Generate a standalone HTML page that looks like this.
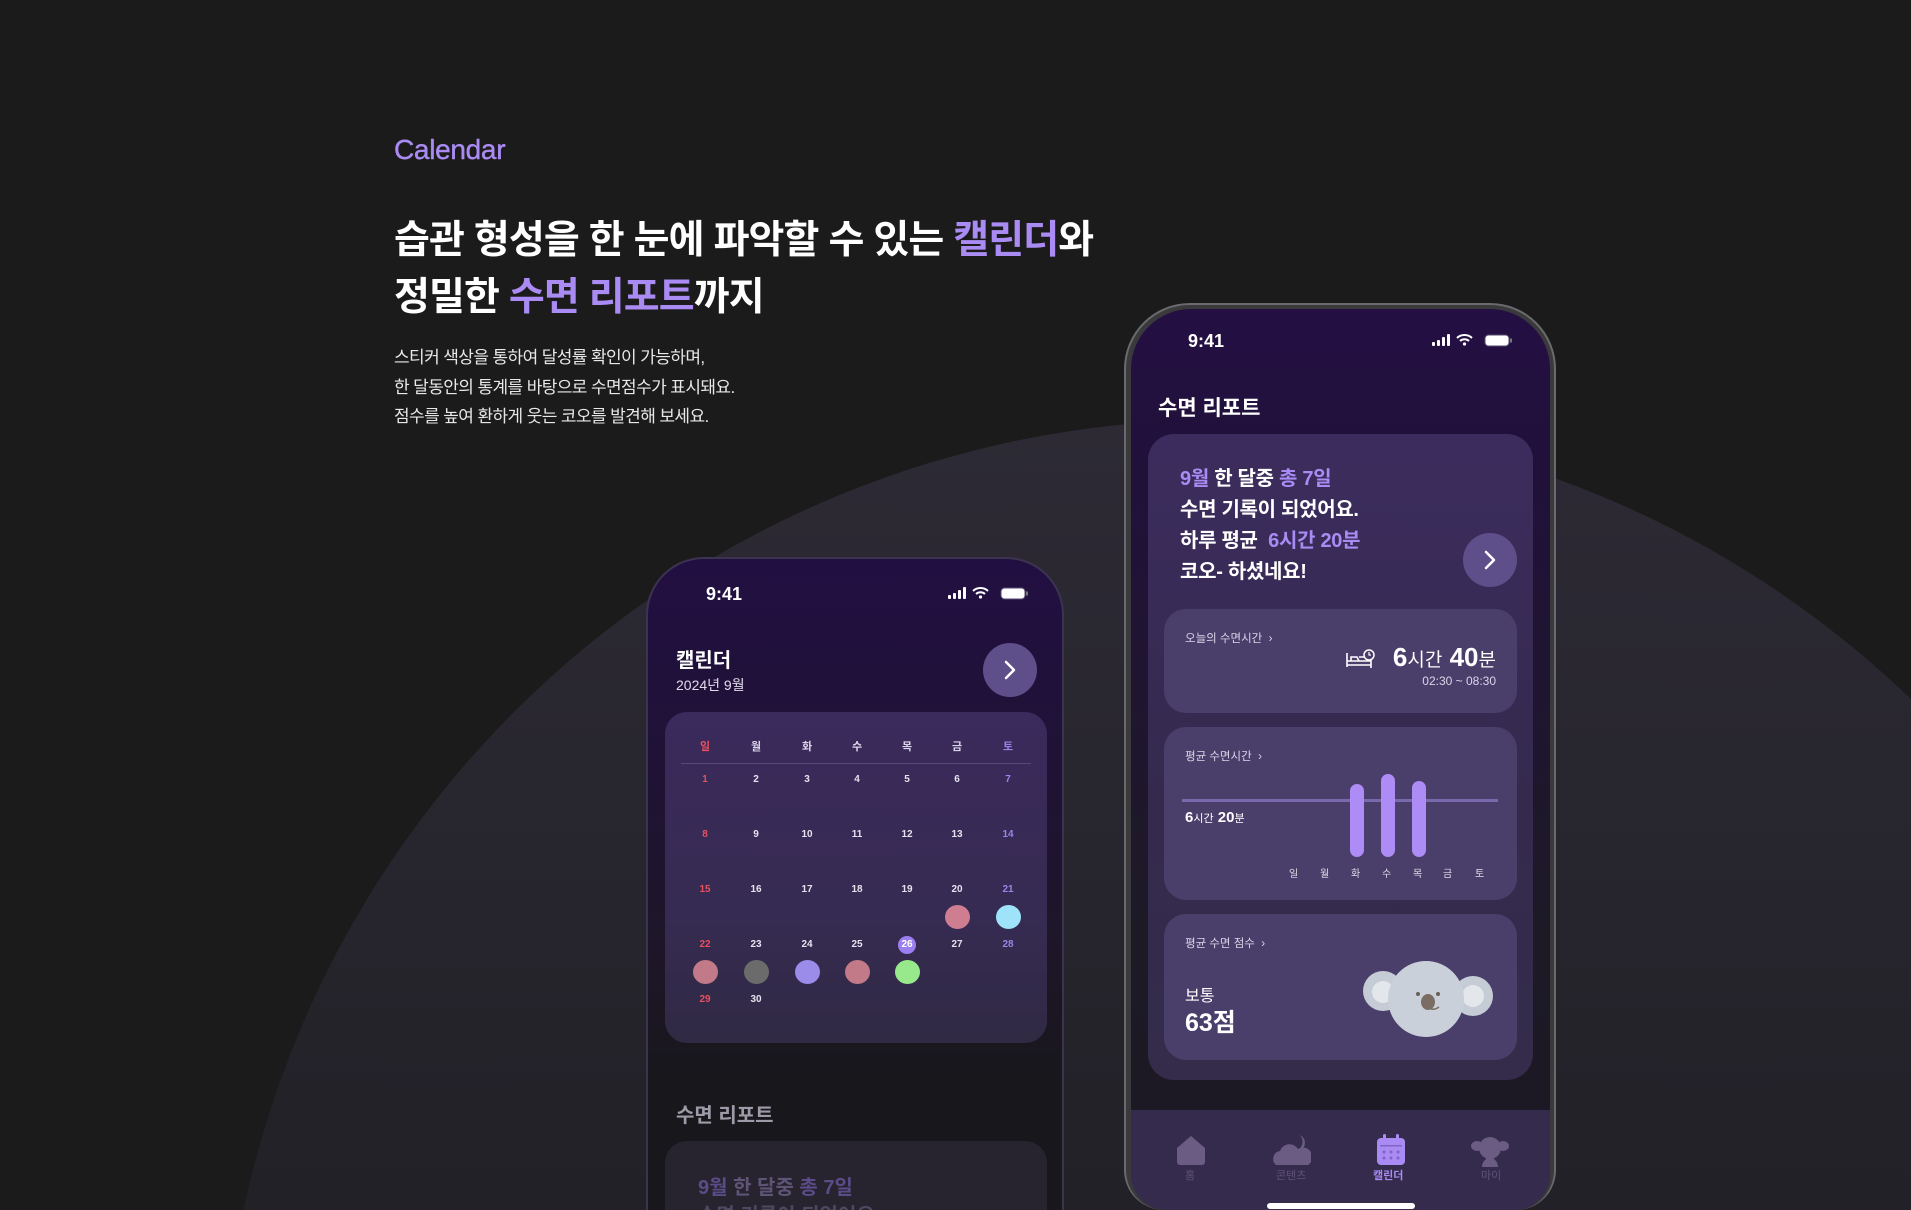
<!DOCTYPE html>
<html style="width:1911px;height:1210px;overflow:hidden"><head><meta charset="utf-8"><style>
*{margin:0;padding:0;box-sizing:border-box}
body{width:1911px;height:1210px;overflow:hidden;background:#1b1b1b;font-family:"Liberation Sans","Noto Sans CJK KR",sans-serif;position:relative;color:#fff}
.a{position:absolute;white-space:nowrap}
.p{color:#a98bf3}
.cl{font-weight:bold}
</style></head><body>
<div style="position:absolute;left:0;top:0;width:1911px;height:1210px;overflow:hidden">
<svg class="a" style="left:0;top:0" width="1911" height="1210" viewBox="0 0 1911 1210">
 <defs><linearGradient id="g" x1="0" y1="420" x2="0" y2="1210" gradientUnits="userSpaceOnUse"><stop offset="0" stop-color="#2d2a35"/><stop offset="1" stop-color="#222127"/></linearGradient></defs>
 <circle cx="1219" cy="1417" r="997" fill="url(#g)"/>
</svg>

<div class="a" style="left:394px;top:134px;font-size:28px;color:#a98bf3;letter-spacing:-0.3px;-webkit-text-stroke:0.4px #a98bf3">Calendar</div>
<div class="a cl" style="left:394px;top:212px;font-size:39px;letter-spacing:-0.9px;line-height:57px">습관 형성을 한 눈에 파악할 수 있는 <span class="p">캘린더</span>와<br>정밀한 <span class="p">수면 리포트</span>까지</div>
<div class="a" style="left:394px;top:343px;font-size:17px;letter-spacing:-0.6px;line-height:29.5px;color:#e8e8e8">스티커 색상을 통하여 달성률 확인이 가능하며,<br>한 달동안의 통계를 바탕으로 수면점수가 표시돼요.<br>점수를 높여 환하게 웃는 코오를 발견해 보세요.</div>

<!-- Left phone -->
<div class="a" style="left:646px;top:557px;width:418px;height:653px;border-radius:58px 58px 0 0;border:2px solid #3b3350;border-bottom:none;background:linear-gradient(180deg,#220f42 0%,#1f1236 30%,#1e1628 60%,#18171c 80%);overflow:hidden">
 <div class="a cl" style="left:58px;top:25px;font-size:18px">9:41</div>
 <svg class="a" style="left:298px;top:27px" width="84" height="16" viewBox="0 0 84 16">
  <rect x="2" y="9" width="3" height="4" rx="1" fill="#fff"/><rect x="7" y="7" width="3" height="6" rx="1" fill="#fff"/><rect x="12" y="4" width="3" height="9" rx="1" fill="#fff"/><rect x="17" y="1" width="3" height="12" rx="1" fill="#fff"/>
  <path d="M27 5a11 11 0 0 1 15 0M30 8a6.5 6.5 0 0 1 9 0" stroke="#fff" stroke-width="2" fill="none"/><circle cx="34.5" cy="11" r="1.6" fill="#fff"/>
  <rect x="55" y="2" width="24" height="11" rx="3.5" fill="#fff" stroke="#554a70"/><rect x="80" y="5.5" width="2" height="4" fill="#777"/>
 </svg>
 <div class="a cl" style="left:28px;top:85px;font-size:20px">캘린더</div>
 <div class="a" style="left:28px;top:116px;font-size:14px;color:#e0dcea">2024년 9월</div>
 <div class="a" style="left:335px;top:84px;width:54px;height:54px;border-radius:50%;background:#5e4e8a"></div>
 <svg class="a" style="left:352px;top:101px" width="20" height="20" viewBox="0 0 20 20"><path d="M6 2l8 8-8 8" stroke="#fff" stroke-width="2.5" fill="none" stroke-linecap="round" stroke-linejoin="round"/></svg>
 <div class="a" style="left:17px;top:153px;width:382px;height:331px;border-radius:22px;background:linear-gradient(180deg,#3b2a5c 0%,#362b52 60%,#302a44 100%)">
  <div class="a" style="left:16px;top:51px;width:350px;height:1px;background:#554a72"></div>
 </div>
 <div id="cal"></div>
 <div class="a cl" style="left:28px;top:540px;font-size:20px;color:#9e9aa8">수면 리포트</div>
 <div class="a" style="left:17px;top:582px;width:382px;height:200px;border-radius:22px;background:#27232f"></div>
 <div class="a cl" style="left:50px;top:612px;font-size:20px;color:#5e5475"><span style="color:#5a4c86">9월</span> 한 달중 <span style="color:#5a4c86">총 7일</span></div>
 <div class="a cl" style="left:50px;top:640px;font-size:20px;color:#4e4960">수면 기록이 되었어요.</div>
</div>

<!-- Right phone -->
<div class="a" style="left:1124px;top:303px;width:432px;height:907px;border-radius:66px 66px 40px 40px;background:#3a3a3c;border:2px solid #6a6a6e;border-bottom:none"></div>
<div class="a" style="left:1131px;top:309px;width:419px;height:901px;border-radius:60px 60px 36px 36px;background:linear-gradient(180deg,#240f43 0%,#21103b 15%,#1d1a26 70%,#1b1824 100%);overflow:hidden">
 <div class="a cl" style="left:57px;top:22px;font-size:18px">9:41</div>
 <svg class="a" style="left:299px;top:24px" width="84" height="16" viewBox="0 0 84 16">
  <rect x="2" y="9" width="3" height="4" rx="1" fill="#fff"/><rect x="7" y="7" width="3" height="6" rx="1" fill="#fff"/><rect x="12" y="4" width="3" height="9" rx="1" fill="#fff"/><rect x="17" y="1" width="3" height="12" rx="1" fill="#fff"/>
  <path d="M27 5a11 11 0 0 1 15 0M30 8a6.5 6.5 0 0 1 9 0" stroke="#fff" stroke-width="2" fill="none"/><circle cx="34.5" cy="11" r="1.6" fill="#fff"/>
  <rect x="55" y="2" width="24" height="11" rx="3.5" fill="#fff" stroke="#554a70"/><rect x="80" y="5.5" width="2" height="4" fill="#777"/>
 </svg>
 <div class="a cl" style="left:27px;top:83px;font-size:21px">수면 리포트</div>
 <div class="a" style="left:17px;top:125px;width:385px;height:646px;border-radius:26px;background:linear-gradient(180deg,#3c2c5e 0%,#352a4f 50%,#342c4a 100%)"></div>
 <div class="a cl" style="left:49px;top:155px;font-size:20px;line-height:31px;letter-spacing:-0.3px"><span class="p">9월</span> 한 달중 <span class="p">총 7일</span><br>수면 기록이 되었어요.<br>하루 평균 &nbsp;<span class="p">6시간 20분</span><br>코오- 하셨네요!</div>
 <div class="a" style="left:332px;top:224px;width:54px;height:54px;border-radius:50%;background:#5e4e8a"></div>
 <svg class="a" style="left:349px;top:241px" width="20" height="20" viewBox="0 0 20 20"><path d="M6 2l8 8-8 8" stroke="#fff" stroke-width="2.5" fill="none" stroke-linecap="round" stroke-linejoin="round"/></svg>

 <div class="a" style="left:33px;top:300px;width:353px;height:104px;border-radius:22px;background:#4a3e6a"></div>
 <div class="a" style="left:54px;top:321px;font-size:11.5px;color:#dcd6ea">오늘의 수면시간 &nbsp;›</div>
 <svg class="a" style="left:214px;top:338px" width="30" height="22" viewBox="0 0 30 22"><path d="M2 6v14M2 18h24v3M2 14h24v4M6 14v-4h6l2 4M14 10h8a4 4 0 0 1 4 4" stroke="#fff" stroke-width="1.6" fill="none"/><circle cx="24" cy="8" r="5" stroke="#fff" stroke-width="1.5" fill="#4a3e6a"/><path d="M24 5v3h2" stroke="#fff" stroke-width="1.2" fill="none"/></svg>
 <div class="a cl" style="right:54px;top:333px;font-size:26px;line-height:30px">6<span style="font-size:19px;font-weight:normal">시간</span> 40<span style="font-size:19px;font-weight:normal">분</span></div>
 <div class="a" style="right:54px;top:365px;font-size:12px;color:#dcd6ea">02:30 ~ 08:30</div>

 <div class="a" style="left:33px;top:418px;width:353px;height:173px;border-radius:22px;background:#4a3e6a"></div>
 <div class="a" style="left:54px;top:439px;font-size:11.5px;color:#dcd6ea">평균 수면시간 &nbsp;›</div>
 <div class="a" style="left:51px;top:490px;width:316px;height:3px;background:#7a68ac"></div>
 <div class="a" style="left:219px;top:475px;width:14px;height:73px;border-radius:7px;background:#ad8cf5"></div>
 <div class="a" style="left:250px;top:465px;width:14px;height:83px;border-radius:7px;background:#ad8cf5"></div>
 <div class="a" style="left:281px;top:472px;width:14px;height:76px;border-radius:7px;background:#ad8cf5"></div>
 <div class="a cl" style="left:54px;top:500px;font-size:15px">6<span style="font-size:11px;font-weight:normal">시간</span> 20<span style="font-size:11px;font-weight:normal">분</span></div>
 <div class="a" style="left:158px;top:556px;font-size:10px;color:#e0dcea">
  <span class="a" style="left:0">일</span><span class="a" style="left:31px">월</span><span class="a" style="left:62px">화</span><span class="a" style="left:93px">수</span><span class="a" style="left:124px">목</span><span class="a" style="left:154px">금</span><span class="a" style="left:186px">토</span></div>

 <div class="a" style="left:33px;top:605px;width:353px;height:146px;border-radius:22px;background:#4a3e6a"></div>
 <div class="a" style="left:54px;top:626px;font-size:11.5px;color:#dcd6ea">평균 수면 점수 &nbsp;›</div>
 <div class="a" style="left:54px;top:673px;font-size:16px">보통</div>
 <div class="a cl" style="left:54px;top:694px;font-size:25px">63점</div>
 <svg class="a" style="left:230px;top:650px" width="134" height="80" viewBox="0 0 134 80">
  <circle cx="22" cy="32" r="20" fill="#c5ccd6"/><circle cx="22" cy="33" r="11" fill="#e3e7ec"/>
  <circle cx="112" cy="37" r="20" fill="#c5ccd6"/><circle cx="112" cy="37" r="11" fill="#e3e7ec"/>
  <circle cx="65" cy="40" r="38" fill="#c9d0da"/>
  <circle cx="57" cy="35" r="2" fill="#6b5f58"/><circle cx="77" cy="35" r="2" fill="#6b5f58"/>
  <ellipse cx="67" cy="43" rx="7" ry="8" fill="#7a6d64"/><path d="M70 50q4 1 8-2" stroke="#7a6d64" stroke-width="1.5" fill="none"/>
 </svg>

 <div class="a" style="left:0;top:801px;width:419px;height:100px;background:#352c4d"></div>
 <svg class="a" style="left:45px;top:826px" width="30" height="30" viewBox="0 0 30 30"><path d="M15 1L29 13V27a3 3 0 0 1-3 3H4a3 3 0 0 1-3-3V13z" fill="#6a5c82"/></svg>
 <div class="a" style="left:54px;top:858px;font-size:11px;color:#5e5278">홈</div>
 <svg class="a" style="left:142px;top:825px" width="38" height="32" viewBox="0 0 38 32"><path d="M3 31a8 8 0 0 1 4-14 10 10 0 0 1 18-2 7 7 0 0 1 10 16z" fill="#6a5c82"/><path d="M27 1a9 9 0 0 1 4 12 8 8 0 0 1-8 4 10 10 0 0 0 4-16z" fill="#6a5c82"/></svg>
 <div class="a" style="left:145px;top:858px;font-size:11px;color:#5e5278">콘텐츠</div>
 <svg class="a" style="left:245px;top:825px" width="30" height="32" viewBox="0 0 30 32"><rect x="1" y="4" width="28" height="27" rx="4" fill="#a98bf3"/><rect x="7" y="0" width="3" height="7" rx="1.5" fill="#a98bf3"/><rect x="20" y="0" width="3" height="7" rx="1.5" fill="#a98bf3"/><rect x="4" y="11" width="22" height="1.5" fill="#7e66c4"/><g fill="#7e66c4"><circle cx="8" cy="18" r="1.5"/><circle cx="15" cy="18" r="1.5"/><circle cx="22" cy="18" r="1.5"/><circle cx="8" cy="24" r="1.5"/><circle cx="15" cy="24" r="1.5"/><circle cx="22" cy="24" r="1.5"/></g></svg>
 <div class="a cl" style="left:242px;top:858px;font-size:11px;color:#a98bf3">캘린더</div>
 <svg class="a" style="left:340px;top:828px" width="38" height="30" viewBox="0 0 38 30"><circle cx="19" cy="11" r="11" fill="#6a5c82"/><ellipse cx="6" cy="9" rx="6" ry="5" fill="#6a5c82"/><ellipse cx="32" cy="9" rx="6" ry="5" fill="#6a5c82"/><path d="M11 30a8 9 0 0 1 16 0z" fill="#6a5c82"/><rect x="15" y="18" width="8" height="6" fill="#6a5c82"/></svg>
 <div class="a" style="left:350px;top:858px;font-size:11px;color:#5e5278">마이</div>
 <div class="a" style="left:136px;top:894px;width:148px;height:6px;border-radius:3px;background:#fff"></div>
</div>
</div>

<script>
(function(){
 var c=document.getElementById('cal');var h='';
 var xs=[57,108,159,209,259,309,360];
 var days=['일','월','화','수','목','금','토'];
 for(var i=0;i<7;i++){var col=i==0?'#e8505e':(i==6?'#9a84e8':'#dcd6ea');
  h+='<div class="a cl" style="left:'+(xs[i]-15)+'px;width:30px;text-align:center;top:179px;font-size:11px;color:'+col+'">'+days[i]+'</div>';}
 var ys=[215,270,325,380,435];
 for(var d=1;d<=30;d++){var k=d-1;var r=Math.floor(k/7),w=k%7;
  var col=w==0?'#e8505e':(w==6?'#9a84e8':'#e6e2ef');
  if(d==26){h+='<div class="a" style="left:'+(xs[w]-9)+'px;top:'+(ys[r]-3)+'px;width:18px;height:18px;border-radius:50%;background:#9b7ff0"></div>';}
  h+='<div class="a cl" style="left:'+(xs[w]-15)+'px;width:30px;text-align:center;top:'+ys[r]+'px;font-size:10px;color:'+(d==26?'#fff':col)+'">'+d+'</div>';}
 var dots=[[5,2,'#cf7d90'],[6,2,'#9fe3fa'],[0,3,'#c27a88'],[1,3,'#6b6b6b'],[2,3,'#9a8ce8'],[3,3,'#c27a88'],[4,3,'#98e98c']];
 dots.forEach(function(o){h+='<div class="a" style="left:'+(xs[o[0]]-12)+'px;top:'+(ys[o[1]]+21)+'px;width:25px;height:24px;border-radius:50%;background:'+o[2]+'"></div>';});
 c.innerHTML=h;
})();
</script>
</body></html>
